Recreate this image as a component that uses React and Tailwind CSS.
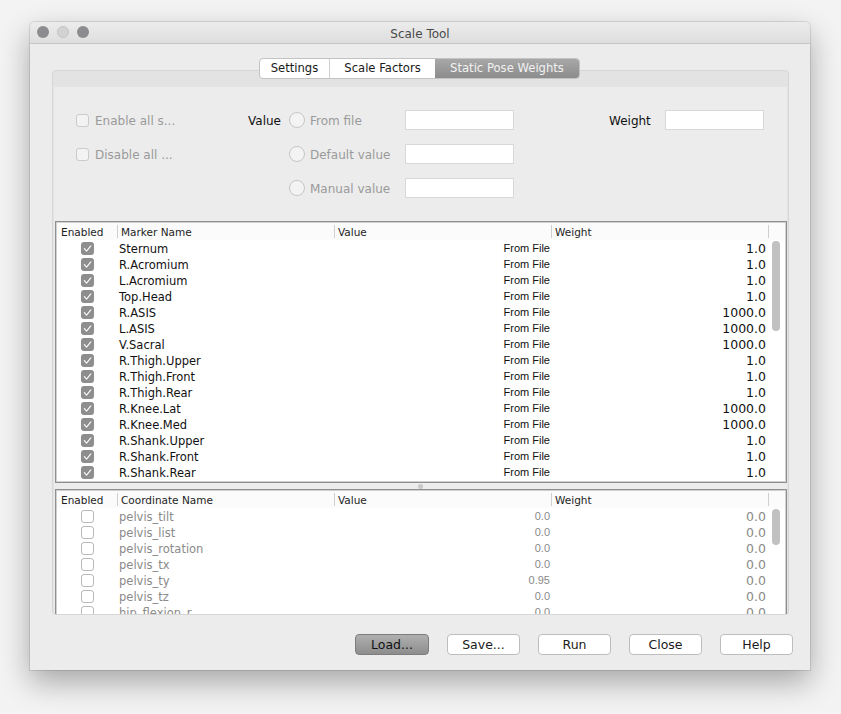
import React from "react";

const markers = [
  ["Sternum", "1.0"],
  ["R.Acromium", "1.0"],
  ["L.Acromium", "1.0"],
  ["Top.Head", "1.0"],
  ["R.ASIS", "1000.0"],
  ["L.ASIS", "1000.0"],
  ["V.Sacral", "1000.0"],
  ["R.Thigh.Upper", "1.0"],
  ["R.Thigh.Front", "1.0"],
  ["R.Thigh.Rear", "1.0"],
  ["R.Knee.Lat", "1000.0"],
  ["R.Knee.Med", "1000.0"],
  ["R.Shank.Upper", "1.0"],
  ["R.Shank.Front", "1.0"],
  ["R.Shank.Rear", "1.0"],
];

const coords = [
  ["pelvis_tilt", "0.0"],
  ["pelvis_list", "0.0"],
  ["pelvis_rotation", "0.0"],
  ["pelvis_tx", "0.0"],
  ["pelvis_ty", "0.95"],
  ["pelvis_tz", "0.0"],
  ["hip_flexion_r", "0.0"],
];

function Checked() {
  return (
    <div className="w-[13px] h-[13px] rounded-[3px] bg-[#8e8e8e] flex items-center justify-center">
      <svg width="13" height="13" viewBox="0 0 13 13">
        <path d="M3.4 6.8 L5.6 9.1 L9.8 3.9" fill="none" stroke="#f4f4f4" strokeWidth="1.3" strokeLinecap="round" strokeLinejoin="round" />
      </svg>
    </div>
  );
}

function Unchecked() {
  return <div className="w-[13px] h-[13px] rounded-[3px] bg-white border border-[#b9b9b9]" />;
}

function Sep() {
  return <div className="w-px h-[13px] bg-[#cfcfcf] shrink-0" />;
}

function Header({ name }) {
  return (
    <div className="flex h-[17px] items-center bg-[#fbfbfb] text-[10.5px] leading-[17px] text-[#1e1e1e]">
      <div className="w-[60px] pl-[4px] pt-[1px] shrink-0">Enabled</div>
      <Sep />
      <div className="w-[216px] pl-[3px] pt-[1px] shrink-0">{name}</div>
      <Sep />
      <div className="w-[216px] pl-[3px] pt-[1px] shrink-0">Value</div>
      <Sep />
      <div className="w-[216px] pl-[3px] pt-[1px] shrink-0">Weight</div>
      <Sep />
    </div>
  );
}

function Btn({ children, primary, w }) {
  return (
    <div
      className={
        "h-[21px] rounded-[4px] flex items-center justify-center text-[12.5px] leading-[19px] " +
        (primary
          ? "bg-gradient-to-b from-[#b0b0b0] to-[#8d8d8d] border border-[#7d7d7d] text-[#111]"
          : "bg-white border border-[#bdbdbd] text-[#1a1a1a]") +
        (w ? " w-[74px]" : " w-[73px]")
      }
    >
      {children}
    </div>
  );
}

function FormCheck({ label }) {
  return (
    <div className="flex items-center gap-[6px]">
      <div className="w-[13px] h-[13px] rounded-[3px] border border-[#cbcbcb] bg-[#f3f3f3]" />
      <span className="text-[12px] leading-[16px] pt-[2px] text-[#9a9a9a]">{label}</span>
    </div>
  );
}

function Radio({ label }) {
  return (
    <div className="flex items-center gap-[5px]">
      <div className="w-[16px] h-[16px] rounded-full border border-[#c6c6c6] bg-[#f3f3f3]" />
      <span className="text-[12px] leading-[16px] pt-[2px] text-[#9a9a9a]">{label}</span>
    </div>
  );
}

function Input({ w }) {
  return <div className={"h-[20px] bg-white border border-[#d8d8d8] " + w} />;
}

function Row({ children }) {
  return <div className="flex h-[16px] items-center leading-[16px]">{children}</div>;
}

export default function App() {
  return (
    <div className="w-[841px] h-[714px] bg-[#f3f3f3] pt-[22px] pl-[30px] font-['DejaVu_Sans',sans-serif] overflow-hidden">
      <div className="w-[780px] h-[648px] rounded-t-[5px] bg-[#ececec] shadow-[0_12px_30px_rgba(0,0,0,0.32),0_0_0_1px_rgba(0,0,0,0.1)] flex flex-col">
        {/* title bar */}
        <div className="relative h-[22px] shrink-0 rounded-t-[5px] bg-gradient-to-b from-[#ececec] to-[#dedede] border-b border-[#c6c6c6] flex items-center justify-center">
          <div className="absolute left-[7px] top-[4px] flex gap-[8px]">
            <div className="w-[12px] h-[12px] rounded-full bg-[#8c8c90]" />
            <div className="w-[12px] h-[12px] rounded-full bg-[#d3d3d3] border border-[#c4c4c4]" />
            <div className="w-[12px] h-[12px] rounded-full bg-[#8c8c90]" />
          </div>
          <span className="text-[12px] leading-[16px] pt-[2px] text-[#4a4a4a]">Scale Tool</span>
        </div>

        {/* tabs */}
        <div className="relative z-10 mt-[14px] flex justify-center pr-[1px]">
          <div className="flex h-[21px] rounded-[4px] border border-[#c3c3c3] bg-white text-[11.6px] leading-[19px] overflow-hidden">
            <div className="w-[70px] flex items-center justify-center text-[#1a1a1a] border-r border-[#d0d0d0]">Settings</div>
            <div className="w-[105px] flex items-center justify-center text-[#1a1a1a]">Scale Factors</div>
            <div className="w-[144px] flex items-center justify-center text-[#f2f2f2] bg-gradient-to-b from-[#a8a8a8] to-[#8c8c8c]">Static Pose Weights</div>
          </div>
        </div>

        {/* panel */}
        <div className="-mt-[9px] ml-[22px] w-[737px] rounded-[4px] border border-[#d6d6d6] bg-[#e3e3e3] pt-[16px] px-[1px]">
          <div className="bg-[#ececec]">
            {/* form */}
            <div className="pt-[16px] pl-[22px] grid grid-cols-[172px_41px_116px_109px_95px_56px_99px] auto-rows-[34px] items-center">
              <FormCheck label="Enable all s..." />
              <span className="text-[12px] leading-[16px] pt-[2px] text-[#111]">Value</span>
              <Radio label="From file" />
              <Input w="w-[109px]" />
              <div />
              <span className="text-[12px] leading-[16px] pt-[2px] text-[#111]">Weight</span>
              <Input w="w-[99px]" />

              <FormCheck label="Disable all ..." />
              <div />
              <Radio label="Default value" />
              <Input w="w-[109px]" />
              <div />
              <div />
              <div />

              <div />
              <div />
              <Radio label="Manual value" />
              <Input w="w-[109px]" />
              <div />
              <div />
              <div />
            </div>

            {/* top table */}
            <div className="mt-[16px] ml-[1px] w-[732px] border border-[#8f8f8f]">
              <div className="border border-[#d0d0d0] bg-white">
                <Header name="Marker Name" />
                <div className="flex">
                  <div className="w-[711px]">
                    {markers.map(([n, w]) => (
                      <Row key={n}>
                        <div className="w-[60px] flex justify-center shrink-0">
                          <Checked />
                        </div>
                        <div className="w-[217px] pl-[2px] pt-[2px] text-[11.5px] text-[#111] shrink-0">{n}</div>
                        <div className="w-[217px] pr-[1px] text-right text-[11px] text-[#111] font-['Liberation_Sans',sans-serif] shrink-0">From File</div>
                        <div className="w-[217px] pr-[2px] pt-[2px] text-right text-[12.5px] text-[#111] shrink-0">{w}</div>
                      </Row>
                    ))}
                  </div>
                  <div className="w-[17px] pl-[4px] pt-[1px]">
                    <div className="w-[8px] h-[90px] rounded-full bg-[#c1c1c1]" />
                  </div>
                </div>
                <div className="h-[1px]" />
              </div>
            </div>

            {/* divider */}
            <div className="h-[6px] flex items-center justify-center">
              <div className="w-[5px] h-[5px] rounded-full bg-[#c9c9c9]" />
            </div>

            {/* bottom table */}
            <div className="ml-[1px] w-[732px] h-[125px] overflow-hidden border border-b-0 border-[#8f8f8f]">
              <div className="border border-[#d0d0d0] bg-white h-[140px]">
                <Header name="Coordinate Name" />
                <div className="flex">
                  <div className="w-[711px]">
                    {coords.map(([n, v]) => (
                      <Row key={n}>
                        <div className="w-[60px] flex justify-center shrink-0">
                          <Unchecked />
                        </div>
                        <div className="w-[217px] pl-[2px] pt-[2px] text-[11.5px] text-[#8a8a8a] shrink-0">{n}</div>
                        <div className="w-[217px] pr-[1px] text-right text-[11px] text-[#8a8a8a] font-['Liberation_Sans',sans-serif] shrink-0">{v}</div>
                        <div className="w-[217px] pr-[2px] pt-[2px] text-right text-[12.5px] text-[#8a8a8a] shrink-0">0.0</div>
                      </Row>
                    ))}
                  </div>
                  <div className="w-[17px] pl-[4px] pt-[1px]">
                    <div className="w-[8px] h-[36px] rounded-full bg-[#c1c1c1]" />
                  </div>
                </div>
              </div>
            </div>
          </div>
        </div>

        {/* buttons */}
        <div className="mt-[19px] flex justify-end pr-[17px] gap-[18px]">
          <Btn primary w>Load...</Btn>
          <Btn>Save...</Btn>
          <Btn>Run</Btn>
          <Btn>Close</Btn>
          <Btn>Help</Btn>
        </div>
      </div>
    </div>
  );
}
